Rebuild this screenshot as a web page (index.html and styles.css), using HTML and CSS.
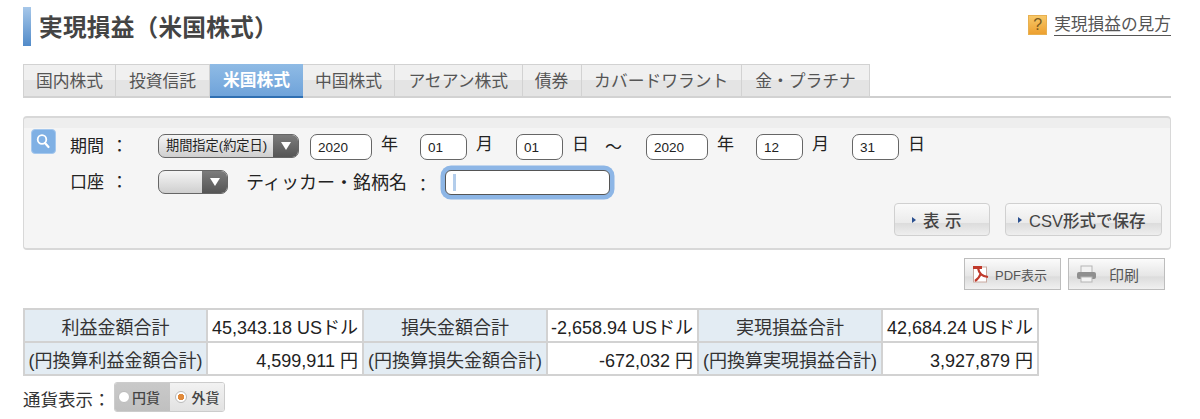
FILE: index.html
```html
<!DOCTYPE html>
<html lang="ja">
<head>
<meta charset="utf-8">
<title>実現損益（米国株式）</title>
<link rel="stylesheet" href="styles.css">
</head>
<body>
<div class="page">
  <header class="head">
    <h1 class="title">実現損益（米国株式）</h1>
    <a class="help" href="#"><span class="help-icon">?</span><span class="help-text">実現損益の見方</span></a>
  </header>
  <nav class="tabs">
    <a class="tab t1">国内株式</a><a class="tab t2">投資信託</a><a class="tab t3 on">米国株式</a><a class="tab t4">中国株式</a><a class="tab t5">アセアン株式</a><a class="tab t6">債券</a><a class="tab t7">カバードワラント</a><a class="tab t8">金・プラチナ</a>
  </nav>
  <section class="panel">
    <span class="search">
      <svg width="25" height="25" viewBox="0 0 25 25"><circle cx="11" cy="10.5" r="4.3" fill="none" stroke="#fff" stroke-width="1.8"/><path d="M14 14l3.5 4" stroke="#fff" stroke-width="2.2" stroke-linecap="round"/></svg>
    </span>
    <div class="row r1">
      <span class="lab">期間</span><span class="colon">：</span>
      <span class="sel s1"><span class="sel-text">期間指定(約定日)</span><span class="arrow"><i></i></span></span>
      <span class="inp y">2020</span><span class="u">年</span>
      <span class="inp m">01</span><span class="u">月</span>
      <span class="inp m">01</span><span class="u">日</span>
      <span class="tilde">～</span>
      <span class="inp y">2020</span><span class="u">年</span>
      <span class="inp m">12</span><span class="u">月</span>
      <span class="inp m">31</span><span class="u">日</span>
    </div>
    <div class="row r2">
      <span class="lab">口座</span><span class="colon">：</span>
      <span class="sel s2"><span class="sel-text"></span><span class="arrow"><i></i></span></span>
      <span class="tick">ティッカー・銘柄名</span><span class="colon2">：</span>
      <span class="focus"><i class="caret"></i></span>
    </div>
    <div class="actions">
      <a class="btn b1"><i class="tri"></i>表 示</a>
      <a class="btn b2"><i class="tri"></i>CSV形式で保存</a>
    </div>
  </section>
  <div class="tools">
    <a class="tool pdf">
      <svg width="18" height="19" viewBox="0 0 18 19"><rect x="1.5" y="2" width="13" height="15" fill="#fff" stroke="#c9a9a0" stroke-width="1"/><path d="M1 1h9v3H1z" fill="#c0392b"/><path d="M6 3c1 6 4 8 10 9M9 8c-1 3-3 6-6 8" fill="none" stroke="#c0392b" stroke-width="2.2"/></svg>
      PDF表示</a>
    <a class="tool prn">
      <svg width="21" height="19" viewBox="0 0 21 19"><rect x="5" y="1" width="11" height="7" fill="#f2f2f2" stroke="#b5b5b5"/><rect x="1" y="7" width="19" height="7" rx="2" fill="#8f8f8f"/><rect x="5" y="12" width="11" height="5" fill="#f4f4f4" stroke="#b5b5b5"/></svg>
      <span>印刷</span></a>
  </div>
  <table class="sum">
    <tr><th>利益金額合計</th><td>45,343.18 USドル</td><th>損失金額合計</th><td>-2,658.94 USドル</td><th>実現損益合計</th><td>42,684.24 USドル</td></tr>
    <tr><th>(円換算利益金額合計)</th><td>4,599,911 円</td><th>(円換算損失金額合計)</th><td>-672,032 円</td><th>(円換算実現損益合計)</th><td>3,927,879 円</td></tr>
  </table>
  <div class="cur">
    <span class="cur-lab">通貨表示：</span>
    <span class="radios">
      <span class="rd off"><i></i>円貨</span><span class="rd sel-on"><i></i>外貨</span>
    </span>
  </div>
</div>
</body>
</html>
```
FILE: styles.css
```css
* { box-sizing: border-box; }
html, body { margin: 0; padding: 0; background: #fff; overflow: hidden; }
body { font-family: "Liberation Sans", "Noto Sans CJK JP", sans-serif; color: #222; font-size: 16px; }
.page { width: 1200px; height: 419px; padding: 7px 29px 0 23px; }

.head { display: flex; justify-content: space-between; height: 39px; }
.title { margin: 0; height: 39px; padding-left: 8px; border-left: 8px solid #6b9fd6; border-image: linear-gradient(#a9c9ea, #4f89c8) 1; font-size: 23.7px; line-height: 42px; font-weight: bold; color: #444; letter-spacing: 0.2px; }
.help { display: flex; align-items: flex-start; color: #555; text-decoration: none; padding-top: 8px; }
.help-icon { width: 19px; height: 20px; margin-right: 7px; background: linear-gradient(#f8c868, #eda030); border: 1px solid #e8b050; color: #7a5a20; font-size: 16px; line-height: 18px; text-align: center; }
.help-text { font-size: 16.7px; line-height: 20px; height: 21px; border-bottom: 1px solid #555; white-space: nowrap; }

.tabs { display: flex; height: 34px; margin-top: 18px; box-shadow: inset 0 -2px 0 #cfcfcf; }
.tab { height: 34px; border: 1px solid #d2d2d2; border-width: 1px 1px 2px 0; background: linear-gradient(#f0f0f0 50%, #e4e4e4 50%); color: #555; font-size: 16.8px; line-height: 33px; text-align: center; white-space: nowrap; }
.t1 { width: 93px; border-left: 1px solid #d2d2d2; }
.t2 { width: 94px; }
.t3 { width: 93px; }
.t4 { width: 92px; }
.t5 { width: 127.5px; }
.t6 { width: 59px; }
.t7 { width: 160.5px; }
.t8 { width: 128px; }
.tab.on { background: linear-gradient(#8fbbe5, #6fa3da); color: #fff; font-weight: bold; border: 0; border-bottom: 2px solid #2f6fb2; line-height: 34px; }

.panel { position: relative; height: 134px; margin-top: 18px; border: 1px solid #d8d8d8; border-top-width: 2px; border-bottom-width: 2px; border-radius: 4px; background: linear-gradient(#eeeeee 10px, #f5f5f5 10px); padding-top: 16px; }
.search { position: absolute; left: 7px; top: 11px; width: 25px; height: 25px; border-radius: 4px; background: #7fb0e4; border: 1px solid #a5c8ee; }
.search svg { display: block; margin: -1px; }
.row { display: flex; align-items: center; height: 26px; padding-left: 46px; font-size: 17px; color: #222; }
.r2 { margin-top: 10px; }
.lab { width: 36px; line-height: 24px; white-space: nowrap; }
.colon { width: 52px; line-height: 24px; padding-left: 5px; }
.sel { display: flex; height: 24px; border: 1px solid #666; border-radius: 7px; overflow: hidden; background: linear-gradient(#f5f5f5, #cfcfcf); margin-top: -2px; }
.s1 { width: 141px; }
.s2 { width: 70px; }
.sel-text { flex: 1; font-size: 13.2px; line-height: 22px; padding-left: 7px; color: #222; white-space: nowrap; }
.arrow { width: 25px; display: flex; align-items: center; justify-content: center; background: linear-gradient(#7c7c7c, #555); }
.arrow i { width: 0; height: 0; border-left: 5px solid transparent; border-right: 5px solid transparent; border-top: 8px solid #fff; }
.inp { height: 26px; border: 1px solid #666; border-radius: 7px; background: #fff; font-size: 13.5px; line-height: 26px; padding-left: 7px; color: #222; }
.inp.y { width: 62px; }
.inp.m { width: 47px; }
.s1 + .inp { margin-left: 11px; }
.u { width: 17px; margin: -5px 23px 0 9px; line-height: 22px; }
.y + .u { margin-right: 22px; }
.r1 .u:last-child { margin-right: 0; }
.tilde { width: 17px; margin: -3px 24px 0 -7px; }
.tick { margin-left: 18px; font-size: 18px; line-height: 24px; white-space: nowrap; }
.colon2 { width: 38px; text-align: center; padding-right: 6px; }
.focus { position: relative; display: block; flex: none; width: 165px; height: 25px; margin-top: -1px; border: 1px solid #555; border-radius: 6px; background: #fff; box-shadow: 0 0 0 4.5px #8db6e6; }
.caret { position: absolute; left: 7px; top: 3px; width: 3px; height: 17px; background: #b3cdeb; }

.actions { position: absolute; top: 85px; left: 870px; display: flex; gap: 15px; }
.btn { display: flex; align-items: center; height: 33px; border: 1px solid #d0d0d0; border-radius: 4px; background: linear-gradient(#fafafa, #ebebeb 60%, #dcdcdc 62%, #eeeeee); color: #444; font-weight: 500; font-size: 16.5px; white-space: nowrap; }
.b1 { width: 96px; padding-left: 17px; letter-spacing: 0.5px; }
.b1 .tri { margin-right: 7px; }
.b2 { width: 157px; padding-left: 12px; }
.b2 .tri { margin-right: 7px; }
.tri { width: 0; height: 0; border-left: 4px solid #2a4f8f; border-top: 3px solid transparent; border-bottom: 3px solid transparent; }

.tools { display: flex; justify-content: flex-end; gap: 7px; margin-top: 8px; padding-right: 6px; }
.tool { display: flex; align-items: center; width: 97px; height: 32px; border: 1px solid #bdbdbd; background: linear-gradient(#fbfbfb, #e6e6e6 55%, #dcdcdc 60%, #f0f0f0); color: #555; font-size: 13px; padding-left: 7px; white-space: nowrap; }
.pdf svg { margin-right: 5px; }
.prn svg { margin-right: 12px; margin-left: 0; }
.prn span { font-size: 15px; }

.sum { border-collapse: collapse; margin-top: 18px; width: 1014px; table-layout: fixed; font-size: 18px; }
.sum th, .sum td { height: 33px; border: 2px solid #d2d2d2; padding: 0 4px 0 0; color: #222; font-weight: normal; white-space: nowrap; }
.sum th { background: #e3ecf3; text-align: center; color: #333; padding: 0; }
.sum td { text-align: right; background: #fff; }
.sum th:nth-child(1) { width: 183px; }
.sum td:nth-child(2) { width: 156px; }
.sum th:nth-child(3) { width: 184px; }
.sum td:nth-child(4) { width: 151px; }
.sum th:nth-child(5) { width: 184px; }
.sum td:nth-child(6) { width: 156px; }

.cur { display: flex; align-items: center; margin-top: 5px; height: 31px; }
.cur-lab { width: 91px; font-size: 17.5px; color: #333; padding-top: 4px; white-space: nowrap; }
.radios { display: flex; width: 111px; height: 30px; border: 1px solid #ccc; border-radius: 3px; overflow: hidden; font-size: 14px; font-weight: 500; color: #444; }
.rd { flex: 1; display: flex; align-items: center; padding-left: 3px; gap: 2px; }
.rd.off { background: linear-gradient(#c9c9c9, #c0c0c0); }
.rd.sel-on { background: linear-gradient(#f2f2f2, #e2e2e2); }
.rd i { width: 12px; height: 12px; border-radius: 50%; background: #fff; border: 1px solid #bbb; flex: none; }
.rd.sel-on i { background: radial-gradient(circle, #e08a3c 0 3px, #fff 3.5px); margin: 0 3px 0 2px; }
```
